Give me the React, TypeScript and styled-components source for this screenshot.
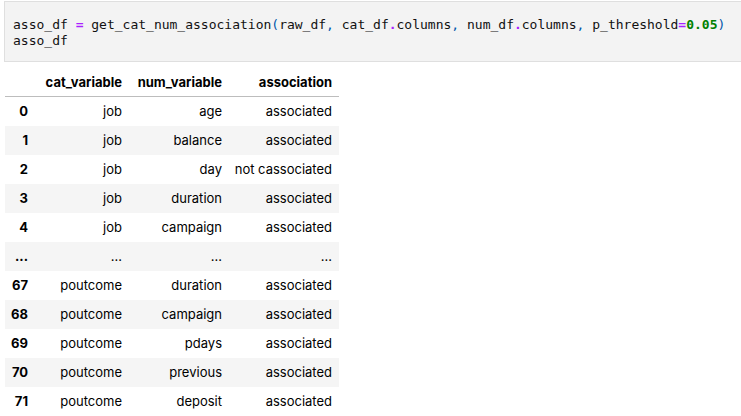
import React from "react";
import styled, { createGlobalStyle } from "styled-components";

const GlobalStyle = createGlobalStyle`
  html, body {
    margin: 0;
    padding: 0;
    background: #ffffff;
    overflow: hidden;
  }
`;

type Row = { idx: string; cat: string; num: string; assoc: string };

const rows: Row[] = [
  { idx: "0", cat: "job", num: "age", assoc: "associated" },
  { idx: "1", cat: "job", num: "balance", assoc: "associated" },
  { idx: "2", cat: "job", num: "day", assoc: "not cassociated" },
  { idx: "3", cat: "job", num: "duration", assoc: "associated" },
  { idx: "4", cat: "job", num: "campaign", assoc: "associated" },
  { idx: "...", cat: "...", num: "...", assoc: "..." },
  { idx: "67", cat: "poutcome", num: "duration", assoc: "associated" },
  { idx: "68", cat: "poutcome", num: "campaign", assoc: "associated" },
  { idx: "69", cat: "poutcome", num: "pdays", assoc: "associated" },
  { idx: "70", cat: "poutcome", num: "previous", assoc: "associated" },
  { idx: "71", cat: "poutcome", num: "deposit", assoc: "associated" },
];

const App: React.FC = () => {
  return (
    <Page>
      <GlobalStyle />
      <CodeCell>
        <CodeLine>
          asso_df <Op>=</Op> get_cat_num_association<Punc>(</Punc>raw_df<Punc>,</Punc> cat_df
          <Op>.</Op>columns<Punc>,</Punc> num_df<Op>.</Op>columns<Punc>,</Punc> p_threshold
          <Op>=</Op>
          <Num>0.05</Num>
          <Punc>)</Punc>
        </CodeLine>
        <CodeLine>asso_df</CodeLine>
      </CodeCell>

      <DataFrame>
        <colgroup>
          <col style={{ width: 30 }} />
          <col style={{ width: 94 }} />
          <col style={{ width: 100 }} />
          <col style={{ width: 110 }} />
        </colgroup>
        <thead>
          <tr>
            <HeadCell></HeadCell>
            <HeadCell>cat_variable</HeadCell>
            <HeadCell>num_variable</HeadCell>
            <HeadCell>association</HeadCell>
          </tr>
        </thead>
        <tbody>
          {rows.map((r) => (
            <BodyRow key={r.idx + r.num}>
              <IndexCell>{r.idx}</IndexCell>
              <Cell>{r.cat}</Cell>
              <Cell>{r.num}</Cell>
              <Cell>{r.assoc}</Cell>
            </BodyRow>
          ))}
        </tbody>
      </DataFrame>
    </Page>
  );
};

export default App;

const Page = styled.div`
  width: 741px;
  height: 416px;
  padding-top: 1px;
  padding-left: 4px;
  box-sizing: border-box;
  overflow: hidden;
`;

const CodeCell = styled.div`
  width: 760px;
  height: 61px;
  box-sizing: border-box;
  background: #f3f3f3;
  border: 1px solid #dfdfdf;
  padding: 15px 0 0 8px;
  font-family: "DejaVu Sans Mono", "Liberation Mono", monospace;
  font-size: 13px;
  line-height: 16px;
  color: #111111;
`;

const CodeLine = styled.div`
  white-space: pre;
`;

const Op = styled.span`
  color: #aa22ff;
  font-weight: bold;
`;

const Punc = styled.span`
  color: #0055aa;
`;

const Num = styled.span`
  color: #008000;
  font-weight: bold;
`;

const DataFrame = styled.table`
  margin-top: 6px;
  margin-left: 1px;
  table-layout: fixed;
  width: 334px;
  border-collapse: collapse;
  border-spacing: 0;
  font-family: Inter, "Liberation Sans", Arial, sans-serif;
  font-size: 13px;
  color: #000000;
`;

const HeadCell = styled.th`
  height: 28px;
  padding: 0 7px 0 0;
  text-align: right;
  font-weight: bold;
  vertical-align: middle;
  border-bottom: 1px solid #bdbdbd;
  white-space: nowrap;
`;

const BodyRow = styled.tr`
  height: 29px;
  &:nth-child(even) {
    background: #f5f5f5;
  }
`;

const IndexCell = styled.th`
  padding: 0 7px 0 0;
  text-align: right;
  font-weight: bold;
  vertical-align: middle;
  white-space: nowrap;
`;

const Cell = styled.td`
  padding: 0 7px 0 0;
  text-align: right;
  vertical-align: middle;
  white-space: nowrap;
`;
